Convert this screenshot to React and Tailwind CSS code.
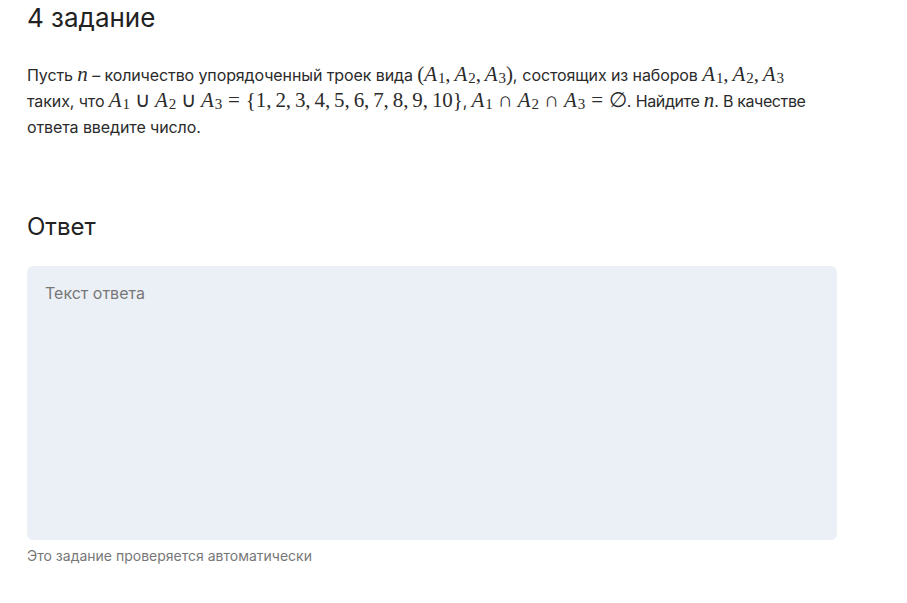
import React from 'react'

const M = ({ children }) => (
  <span className="font-['Liberation_Serif',serif] text-[21px] leading-none whitespace-nowrap">{children}</span>
)
const V = ({ children }) => <i>{children}</i>
const A = ({ n }) => (
  <>
    <i>A</i>
    <sub className="text-[15px] not-italic relative -bottom-[2px] align-baseline ml-[1px]">{n}</sub>
  </>
)
const C = () => <span className="mr-[4px]">,</span>
const Bin = ({ children }) => <span className="mx-[5px] font-light">{children}</span>
const Rel = ({ children }) => <span className="mx-[6px]">{children}</span>

const nums = ['1', '2', '3', '4', '5', '6', '7', '8', '9', '10']

function App() {
  return (
    <div className="min-h-screen bg-white font-['Inter',sans-serif] text-[#222] pl-[27px] pr-[70px]">
      <h1 className="text-[26px] leading-none pt-[5px] font-normal">4 задание</h1>

      <p className="mt-[31px] text-[16px] leading-[26px] text-[#2b2b2b] max-w-[800px] tracking-[-0.1px]">
        Пусть <M><V>n</V></M> – количество упорядоченный троек вида{' '}
        <M>(<A n="1" /><C /><A n="2" /><C /><A n="3" />)</M>,<span className="ml-[5px]">состоящих</span> из наборов{' '}
        <M><A n="1" /><C /><A n="2" /><C /><A n="3" /></M> таких, что{' '}
        <M>
          <A n="1" /><Bin>∪</Bin><A n="2" /><Bin>∪</Bin><A n="3" /><Rel>=</Rel>
          {'{'}
          {nums.map((x, i) => (
            <React.Fragment key={x}>
              {x}
              {i < nums.length - 1 && <C />}
            </React.Fragment>
          ))}
          {'}'}
        </M>
        ,{' '}
        <M><A n="1" /><Bin>∩</Bin><A n="2" /><Bin>∩</Bin><A n="3" /><Rel>=</Rel>∅</M>.{' '}
        <span className="tracking-[-0.4px]">Найдите</span> <M><V>n</V></M>.{' '}
        <span className="tracking-[-0.4px]">В качестве</span> ответа введите число.
      </p>

      <h2 className="mt-[75px] text-[24px] leading-none font-normal">Ответ</h2>

      <div className="mt-[27px] w-[810px] h-[274px] bg-[#ebf0f6] rounded-[6px] px-[18px] pt-[15px]">
        <span className="text-[16px] text-[#777]">Текст ответа</span>
      </div>

      <p className="mt-[5px] text-[14px] text-[#777]">Это задание проверяется автоматически</p>
    </div>
  )
}

export default App
